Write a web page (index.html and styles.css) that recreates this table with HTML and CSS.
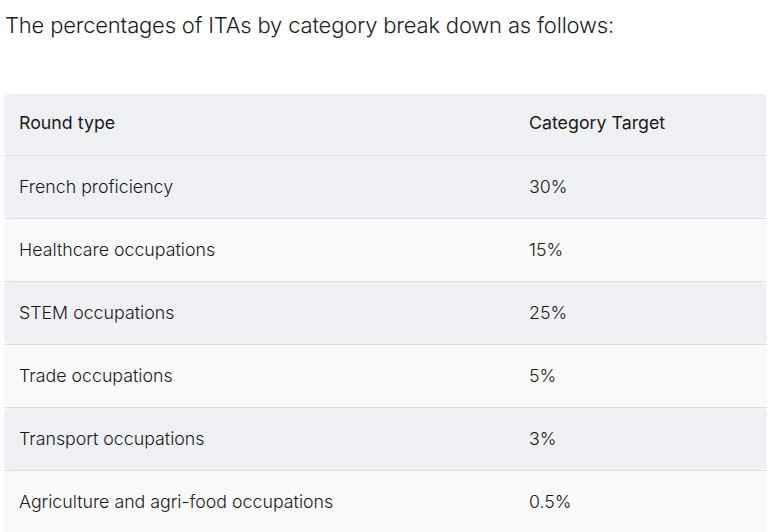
FILE: index.html
```html
<!DOCTYPE html>
<html lang="en">
<head>
<meta charset="utf-8">
<link rel="stylesheet" href="styles.css">
</head>
<body>
<p class="intro">The percentages of ITAs by category break down as follows:</p>
<div class="table">
  <div class="row head"><div class="cells"><div class="c1">Round type</div><div class="c2">Category Target</div></div></div>
  <div class="row odd"><div class="cells"><div class="c1">French proficiency</div><div class="c2">30%</div></div></div>
  <div class="row even"><div class="cells"><div class="c1">Healthcare occupations</div><div class="c2">15%</div></div></div>
  <div class="row odd"><div class="cells"><div class="c1">STEM occupations</div><div class="c2">25%</div></div></div>
  <div class="row even"><div class="cells"><div class="c1">Trade occupations</div><div class="c2">5%</div></div></div>
  <div class="row odd"><div class="cells"><div class="c1">Transport occupations</div><div class="c2">3%</div></div></div>
  <div class="row even"><div class="cells"><div class="c1">Agriculture and agri-food occupations</div><div class="c2">0.5%</div></div></div>
</div>
</body>
</html>
```
FILE: styles.css
```css
html, body {
  margin: 0;
  padding: 0;
  background: #ffffff;
}
body {
  font-family: Inter, "Liberation Sans", sans-serif;
  color: #1a1a1a;
  padding: 0 5px 0 4px;
}
.intro {
  margin: 0;
  padding: 10px 0 0 1px;
  font-size: 22px;
  font-weight: 300;
  line-height: 30px;
  letter-spacing: -0.18px;
  color: #1c1c1c;
}
.table {
  margin-top: 54px;
  display: flex;
  flex-direction: column;
}
.row {
  border-bottom: 1px solid #dcdde0;
}
.cells {
  display: grid;
  grid-template-columns: 510px 1fr;
  border-radius: 5px;
  font-size: 17.8px;
  font-weight: 300;
  line-height: 24px;
}
.cells > div {
  padding: 19px 15px;
}
.head .cells > div {
  padding: 17px 15px 20px;
}
.head .cells, .odd .cells {
  background: #eff0f3;
}
.even .cells {
  background: #f9f9f9;
}
.head .cells {
  font-weight: 400;
}
```
